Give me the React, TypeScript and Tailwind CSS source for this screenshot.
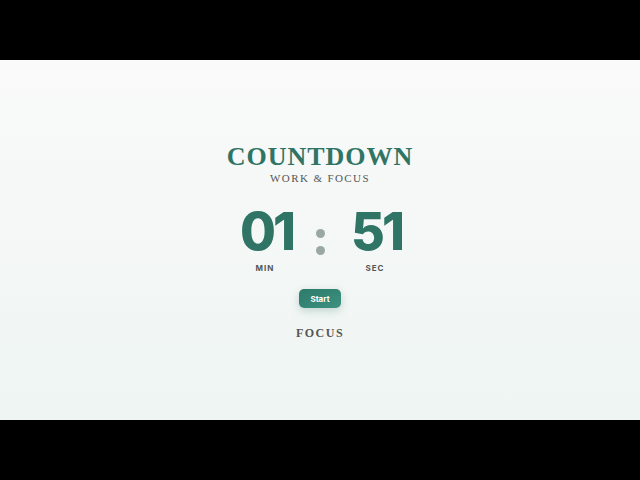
export default function App() {
  return (
    <div className="flex h-screen w-full flex-col bg-black">
      <div className="h-[60px] shrink-0" />
      <div className="flex h-[360px] shrink-0 flex-col items-center bg-gradient-to-b from-[#fafafa] to-[#eef5f2] pt-[82px]">
        <h1 className="font-['Liberation_Serif',serif] text-[26px] font-bold leading-[30px] tracking-[1px] text-[#2f7464]">
          COUNTDOWN
        </h1>
        <p className="font-['Liberation_Serif',serif] text-[11px] leading-[12px] tracking-[1.4px] text-[#555]">
          WORK &amp; FOCUS
        </p>

        <div className="mt-[21px] flex items-start font-['Inter',sans-serif]">
          <div className="flex w-[80px] flex-col items-center">
            <span className="pl-[3px] text-[52px] font-extrabold leading-[54px] tracking-[-3px] text-[#2f7464]">01</span>
            <span className="mt-[3px] text-[8px] font-bold tracking-[1px] text-[#555]">MIN</span>
          </div>
          <div className="mx-[7px] flex w-[16px] flex-col items-center gap-[8px] pt-[24px]">
            <span className="h-[9px] w-[9px] rounded-full bg-[#9aa8a2]" />
            <span className="h-[9px] w-[9px] rounded-full bg-[#9aa8a2]" />
          </div>
          <div className="flex w-[80px] flex-col items-center">
            <span className="pl-[3px] text-[52px] font-extrabold leading-[54px] tracking-[-3px] text-[#2f7464]">51</span>
            <span className="mt-[3px] text-[8px] font-bold tracking-[1px] text-[#555]">SEC</span>
          </div>
        </div>

        <button className="mt-[15px] h-[19px] w-[42px] rounded-[5px] bg-gradient-to-br from-[#2e7a69] to-[#3d9281] font-['Inter',sans-serif] text-[8px] font-bold text-white shadow-[0_3px_8px_rgba(47,116,100,0.25)]">
          Start
        </button>

        <p className="mt-[16px] font-['Liberation_Serif',serif] text-[12px] font-bold tracking-[1.5px] text-[#555]">
          FOCUS
        </p>
      </div>
      <div className="flex-1" />
    </div>
  )
}
